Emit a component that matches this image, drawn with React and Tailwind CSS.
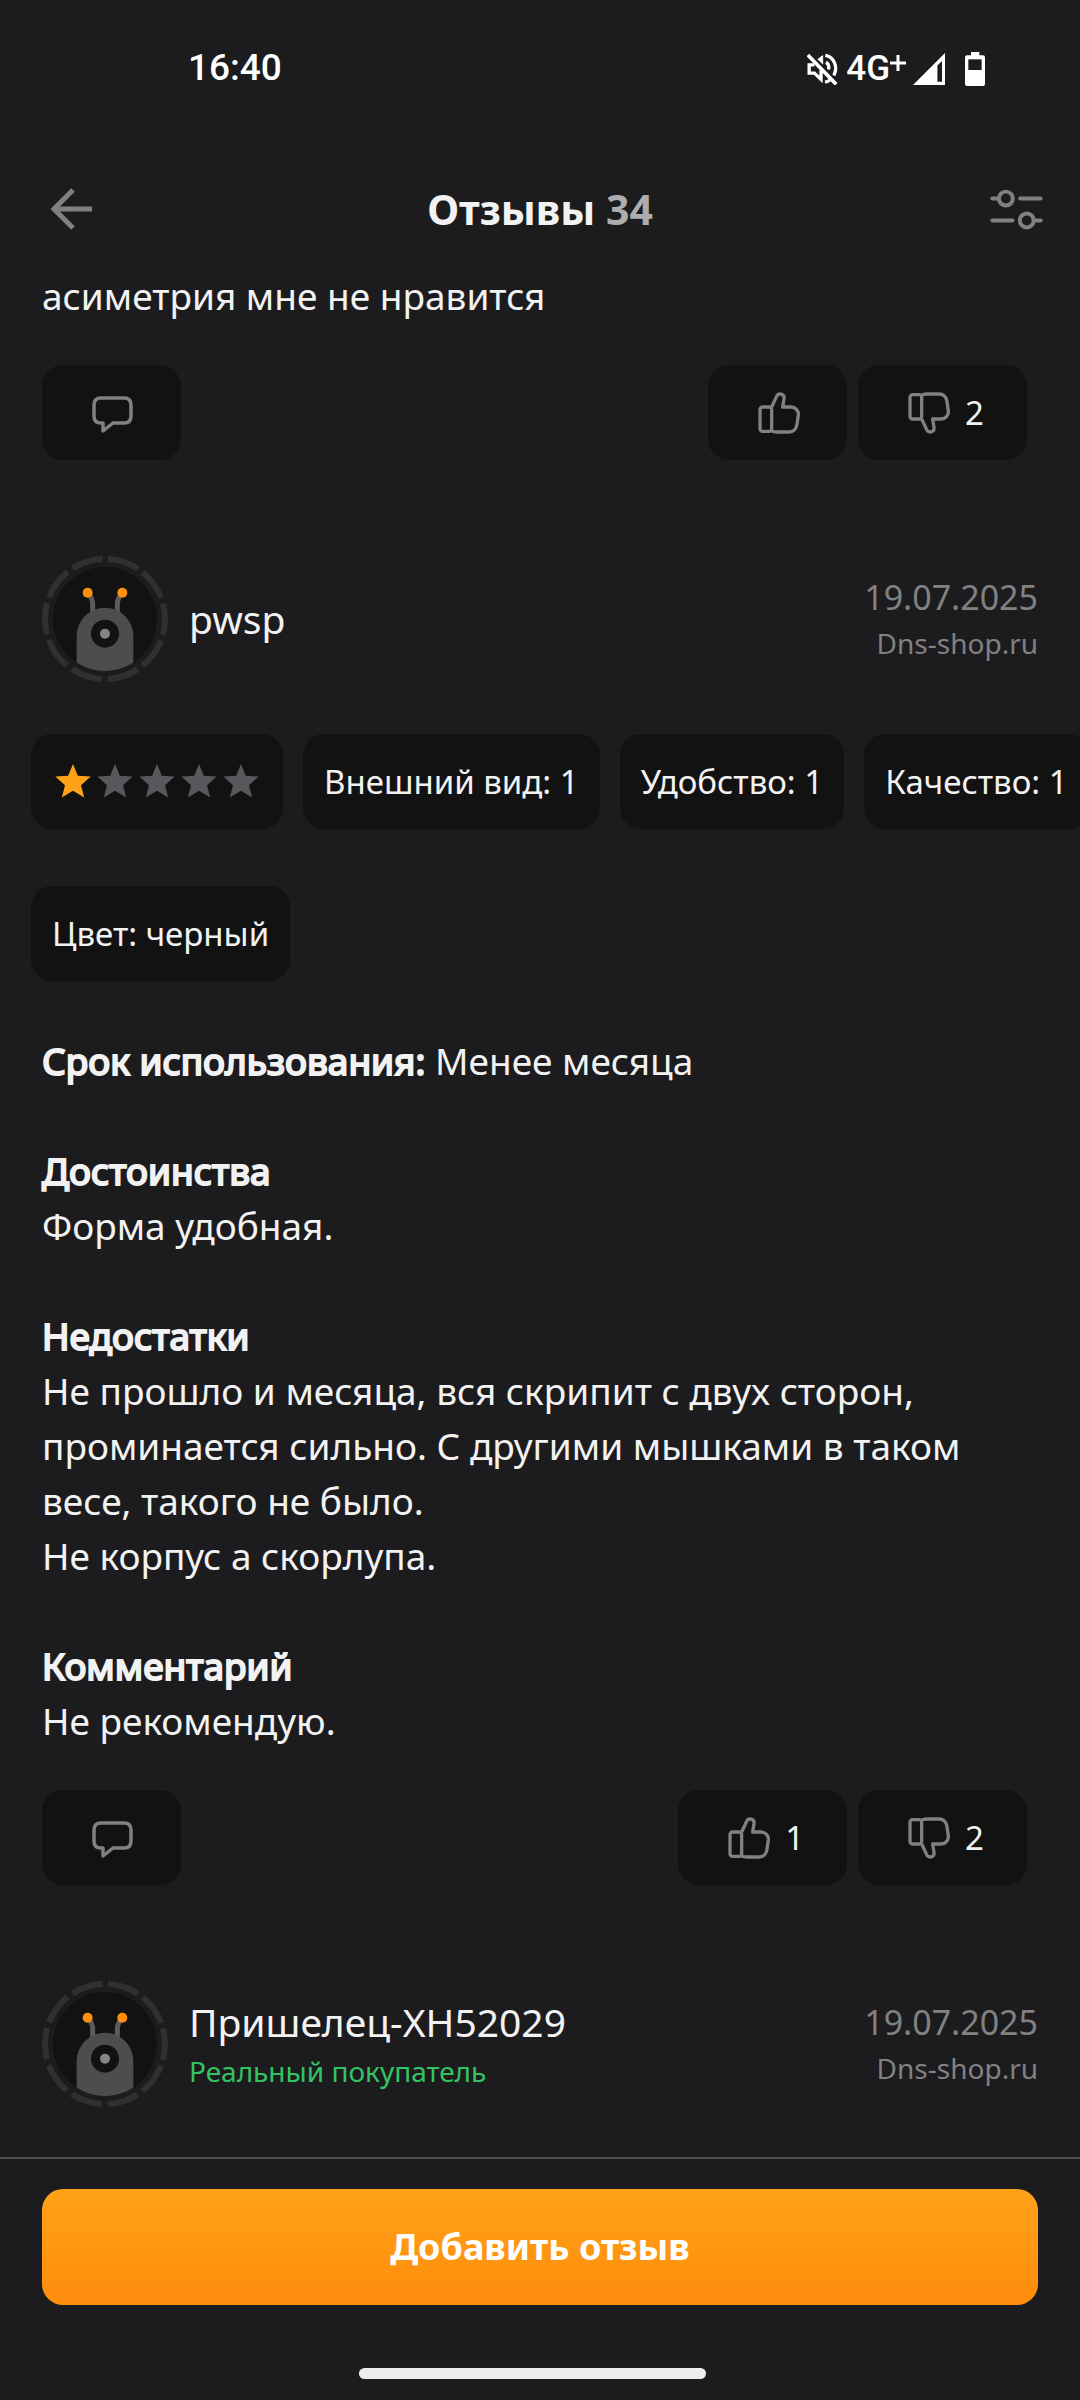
const sections = [
  { title: 'Достоинства', text: ['Форма удобная.'] },
  {
    title: 'Недостатки',
    text: [
      'Не прошло и месяца, вся скрипит с двух сторон, проминается сильно. С другими мышками в таком весе, такого не было.',
      'Не корпус а скорлупа.',
    ],
  },
  { title: 'Комментарий', text: ['Не рекомендую.'] },
];

const ratings = ['Внешний вид: 1', 'Удобство: 1', 'Качество: 1'];

function StatusBar() {
  return (
    <div className="flex h-[134px] items-center justify-between pr-[95px] pl-[188px] font-[Roboto,sans-serif] text-white">
      <span className="text-[37px] leading-none font-medium">16:40</span>
      <div className="flex items-center pt-[3px]">
        <svg className="h-8 w-[31px]" viewBox="0 0 93 97" fill="none" stroke="currentColor" strokeWidth="10">
          <path d="M2 6 L88 95" strokeWidth="11" />
          <path d="M22 36 H6 V61 H22 L42 80 V52" />
          <path d="M32 20 L47 8 V34" fill="currentColor" strokeWidth="3" />
          <path d="M57 28 C64 32 67 40 65 50" />
          <path d="M55 7 C82 12 94 42 81 68" />
          <path d="M54 88 C60 87 64 85 69 82" />
        </svg>
        <span className="ml-2 text-[35px] leading-none font-medium">4G</span>
        <svg className="mr-[7px] mb-3 size-4" viewBox="0 0 16 16" stroke="currentColor" strokeWidth="3">
          <path d="M8 0 V16 M0 8 H16" />
        </svg>
        <svg className="h-8 w-8" viewBox="0 0 97 97">
          <path d="M97 0 V97 H0 Z" fill="currentColor" />
          <path d="M74 38 L88 24 V87 H74 Z" fill="#1c1c1e" />
        </svg>
        <svg className="ml-5 h-[34px] w-5" viewBox="0 0 60 102">
          <path
            d="M18 0 H43 V10 H54 Q60 10 60 16 V96 Q60 102 54 102 H6 Q0 102 0 96 V16 Q0 10 6 10 H18 Z"
            fill="currentColor"
          />
          <path d="M10 22 H50 V54 H10 Z" fill="#1c1c1e" />
        </svg>
      </div>
    </div>
  );
}

function Header() {
  return (
    <header className="relative z-10 bg-[#1c1c1e]">
      <StatusBar />
      <div className="flex h-[150px] items-center justify-between pr-[37px] pl-[50px]">
        <button type="button" aria-label="Назад" className="flex w-10 text-[#818181]">
          <svg className="size-[42px] shrink-0" viewBox="0 0 42 42" fill="none" stroke="currentColor" strokeWidth="5">
            <path d="M23 2 L4 21 L23 40 M4 21 H42" />
          </svg>
        </button>
        <h1 className="text-[41px] leading-none font-bold text-[#f2f2f2]">
          Отзывы <span className="text-[#adadad]">34</span>
        </h1>
        <button type="button" aria-label="Фильтры" className="flex text-[#818181]">
          <svg
            className="h-[41px] w-[53px]"
            viewBox="0 0 160 122"
            fill="none"
            stroke="currentColor"
            strokeWidth="12"
            strokeLinecap="round"
          >
            <circle cx="48" cy="28" r="21" />
            <path d="M7 28 H26 M91 28 H153" />
            <circle cx="111" cy="94" r="21" />
            <path d="M7 94 H68 M134 94 H153" />
          </svg>
        </button>
      </div>
    </header>
  );
}

function Thumb({ down }) {
  return (
    <svg
      className={down ? 'size-[42px] -scale-y-100' : 'size-[42px]'}
      viewBox="0 0 126 126"
      fill="none"
      stroke="currentColor"
      strokeWidth="10"
      strokeLinejoin="round"
    >
      <rect x="6" y="45" width="35" height="73" rx="8" />
      <path d="M41 45 L56 13 C61 2 80 4 78 20 L74 45 H98 C113 45 122 56 121 69 L117 97 C115 112 105 120 94 120 H56 C50 120 46 118 41 118" />
    </svg>
  );
}

function ActionButton({ label, count, children }) {
  return (
    <button
      type="button"
      aria-label={label}
      className={`flex h-[95px] items-center gap-[15px] rounded-[21px] bg-[#121212] pl-[50px] text-[33px] leading-none text-[#f2f2f2] ${
        count ? 'pr-[43px]' : 'pr-[47px]'
      }`}
    >
      <span className="text-[#818181]">{children}</span>
      {count && <span>{count}</span>}
    </button>
  );
}

function Actions({ likes, dislikes }) {
  return (
    <div className="mt-[42px] flex gap-[11px] pr-[11px]">
      <div className="flex-1">
        <ActionButton label="Комментировать">
          <svg
            className="size-[42px]"
            viewBox="0 0 42 42"
            fill="none"
            stroke="currentColor"
            strokeWidth="3.5"
            strokeLinejoin="round"
          >
            <path d="M9 6 H32 Q39 6 39 13 V24 Q39 31 32 31 H21 L11 39 V31 H9 Q2 31 2 24 V13 Q2 6 9 6 Z" />
          </svg>
        </ActionButton>
      </div>
      <ActionButton label="Нравится" count={likes}>
        <Thumb />
      </ActionButton>
      <ActionButton label="Не нравится" count={dislikes}>
        <Thumb down />
      </ActionButton>
    </div>
  );
}

function Avatar({ id }) {
  return (
    <svg className="size-[126px] shrink-0" viewBox="0 0 378 378" fill="none">
      <clipPath id={id}>
        <circle cx="189" cy="189" r="156" />
      </clipPath>
      <circle
        cx="189"
        cy="189"
        r="180"
        stroke="#303030"
        strokeWidth="18"
        strokeDasharray="95.1 18"
        strokeDashoffset="-9"
        transform="rotate(-90 189 189)"
      />
      <circle cx="189" cy="189" r="156" fill="#121212" />
      <path d="M152 170 V145 C152 130 148 122 137 110 M226 170 V145 C226 130 230 122 241 110" stroke="#5c5c60" strokeWidth="15" />
      <circle cx="137" cy="110" r="15" fill="#ff8f0c" />
      <circle cx="241" cy="110" r="15" fill="#ff8f0c" />
      <path d="M104 378 V240 A85 85 0 0 1 274 240 V378 Z" fill="#4d4d4d" clipPath={`url(#${id})`} />
      <circle cx="189" cy="233" r="42" fill="#121212" />
      <circle cx="189" cy="233" r="15" fill="#858585" />
    </svg>
  );
}

function Author({ id, name, verified }) {
  return (
    <div className="mt-24 flex items-center gap-[21px]">
      <Avatar id={id} />
      <div className="flex-1">
        <div className="text-[39px] leading-[54px] text-[#f2f2f2]">{name}</div>
        {verified && <div className="text-[28px] leading-[44px] text-[#34c363]">Реальный покупатель</div>}
      </div>
      <div className="text-right text-[#818181]">
        <div className="text-[34px] leading-[48px]">19.07.2025</div>
        <div className="text-[28px] leading-[44px]">Dns-shop.ru</div>
      </div>
    </div>
  );
}

function Chip({ children }) {
  return (
    <li className="flex h-[95px] shrink-0 items-center rounded-[21px] bg-[#121212] px-[21px] text-[33px] leading-none whitespace-nowrap text-[#f2f2f2]">
      {children}
    </li>
  );
}

function Star({ filled }) {
  return (
    <svg
      className={filled ? 'size-[42px] text-[#ffa218]' : 'size-[42px] text-[#58585c]'}
      viewBox="0 0 42 42"
      fill="currentColor"
    >
      <path d="M21 3 L25.8 14.8 L38.7 15.6 L29 24.2 L32.2 36.6 L21 29.8 L9.8 36.6 L13 24.2 L3.3 15.6 L16.2 14.8 Z" />
    </svg>
  );
}

export default function App() {
  return (
    <div className="flex min-h-screen flex-col overflow-hidden bg-[#1c1c1e] font-['Noto_Sans',sans-serif]">
      <Header />

      <main className="-mt-4 flex-1 px-[42px] pb-[50px] text-[37px] leading-[55px] text-[#f2f2f2]">
        <article>
          <p>асиметрия мне не нравится</p>
          <Actions dislikes={2} />
        </article>

        <article>
          <Author id="avatar-pwsp" name="pwsp" />
          <ul className="-mx-[42px] mt-[52px] flex gap-5 overflow-hidden pl-[31px]">
            <Chip>
              <span className="flex" role="img" aria-label="1 из 5">
                {[1, 2, 3, 4, 5].map((n) => (
                  <Star key={n} filled={n === 1} />
                ))}
              </span>
            </Chip>
            {ratings.map((rating) => (
              <Chip key={rating}>{rating}</Chip>
            ))}
          </ul>
          <ul className="-mx-[11px] mt-[57px] flex">
            <Chip>Цвет: черный</Chip>
          </ul>

          <p className="mt-[52px]">
            <b className="font-normal [-webkit-text-stroke:2px]">Срок использования:</b> Менее месяца
          </p>
          {sections.map((section) => (
            <section key={section.title} className="mt-[55px]">
              <h2 className="[-webkit-text-stroke:2px]">{section.title}</h2>
              {section.text.map((line) => (
                <p key={line}>{line}</p>
              ))}
            </section>
          ))}
          <Actions likes={1} dislikes={2} />
        </article>

        <article>
          <Author id="avatar-alien" name="Пришелец-XH52029" verified />
        </article>
      </main>

      <footer className="border-t-2 border-[#4d4d4f] px-[42px] pt-[30px] pb-[21px]">
        <button
          type="button"
          className="h-[116px] w-full rounded-[21px] bg-linear-to-b from-[#ffa218] to-[#ff8c0c] text-[36px] leading-none font-bold text-white"
        >
          Добавить отзыв
        </button>
        <div className="mt-[63px] pr-4">
          <div className="mx-auto h-[11px] w-[347px] rounded-full bg-[#ededed]" />
        </div>
      </footer>
    </div>
  );
}
